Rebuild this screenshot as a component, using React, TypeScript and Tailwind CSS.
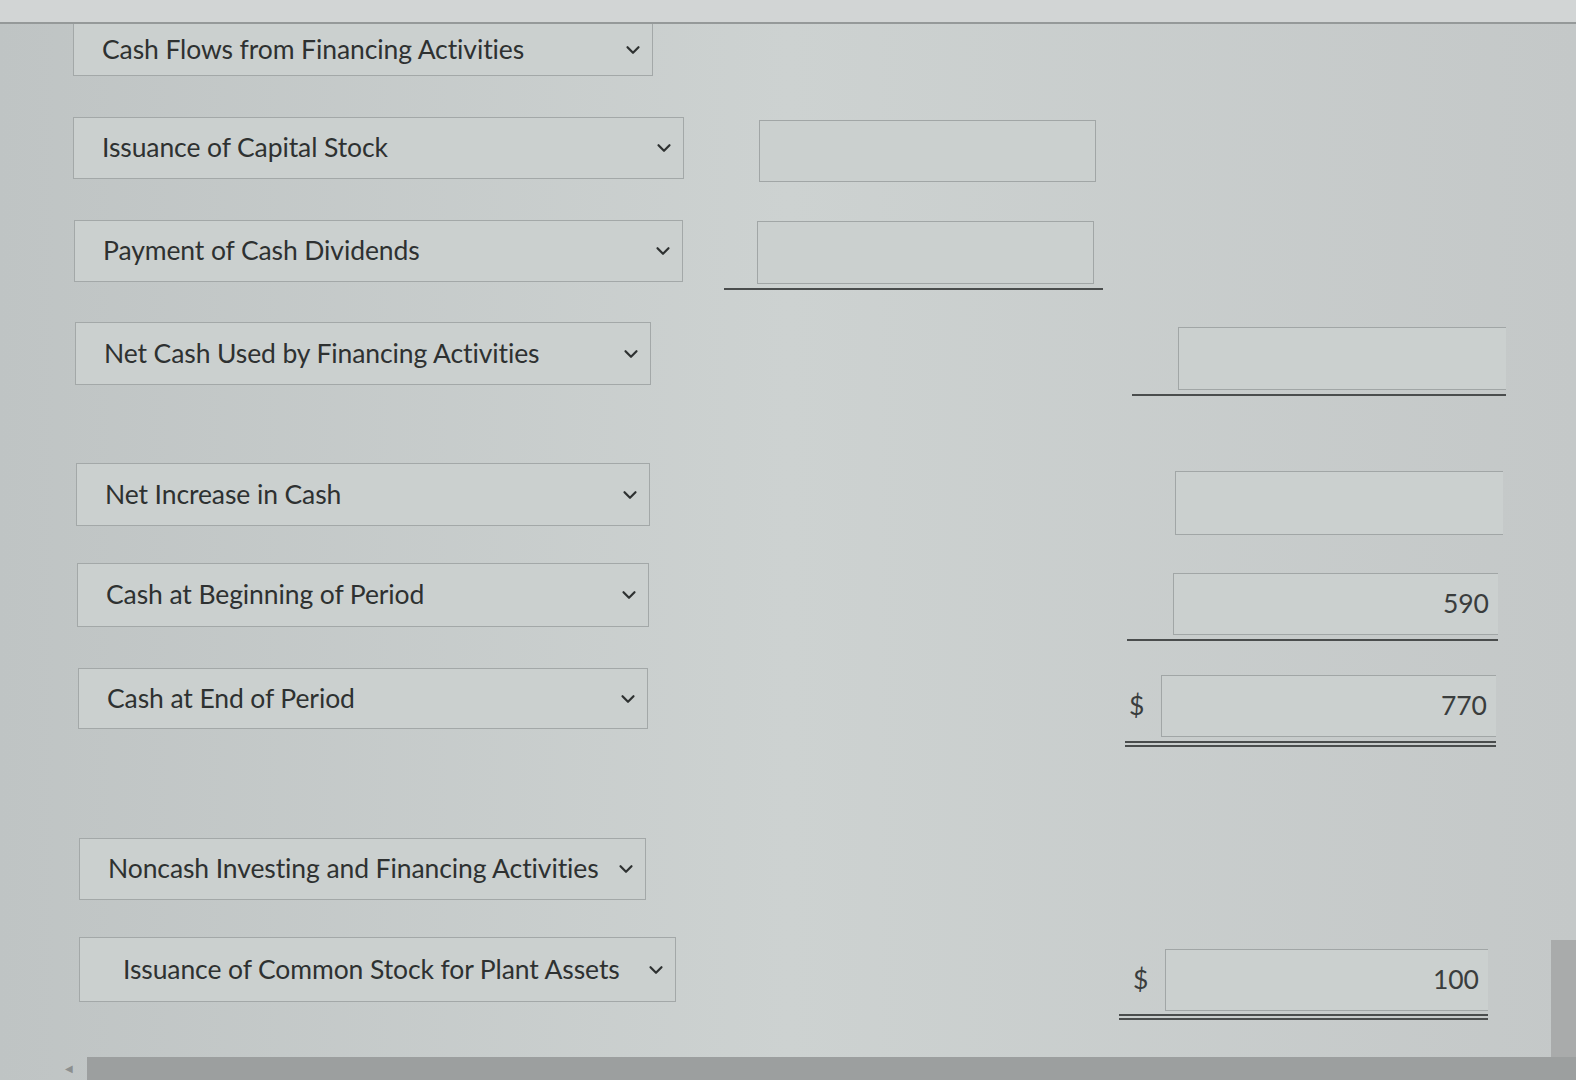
import { ChevronDown } from "lucide-react";

type SelectProps = {
  label: string;
  className: string;
  textClass?: string;
};

function SelectBox({ label, className, textClass = "pl-[28px]" }: SelectProps) {
  return (
    <div
      className={`flex shrink-0 items-center justify-between border border-[#a3a8a8] bg-[#cbd0cf] pr-[8px] ${className}`}
    >
      <span className={`text-[26.5px] tracking-[-0.1px] text-[#2e3131] ${textClass}`}>{label}</span>
      <ChevronDown size={22} strokeWidth={2.4} className="text-[#2e3131]" />
    </div>
  );
}

function AmountBox({ value, className }: { value?: string; className: string }) {
  return (
    <div
      className={`flex shrink-0 items-center justify-end border border-[#a1a6a6] bg-[#cbd0cf] pr-[9px] text-[26.5px] text-[#3a3d3d] ${className}`}
    >
      {value}
    </div>
  );
}

function App() {
  return (
    <div
      className="relative flex h-[1080px] w-[1576px] flex-col overflow-hidden bg-linear-to-r from-[#bfc4c4] via-[#cdd2d1] to-[#c4c8c8]"
      style={{ fontFamily: "Lato, 'Open Sans', sans-serif" }}
    >
      <div className="h-[24px] shrink-0 border-b-2 border-[#959999] bg-[#d2d5d5]" />

      <div className="flex min-h-0 flex-1 flex-col">
        {/* Cash Flows from Financing Activities */}
        <div className="flex h-[52px]">
          <SelectBox
            label="Cash Flows from Financing Activities"
            className="ml-[73px] h-[52px] w-[580px] border-t-0"
          />
        </div>

        {/* Issuance of Capital Stock */}
        <div className="mt-[41px] flex h-[62px] items-start">
          <SelectBox label="Issuance of Capital Stock" className="ml-[73px] h-[62px] w-[611px]" />
          <AmountBox className="ml-[75px] mt-[3px] h-[62px] w-[337px]" />
        </div>

        {/* Payment of Cash Dividends */}
        <div className="mt-[41px] flex h-[62px] items-start">
          <SelectBox label="Payment of Cash Dividends" className="ml-[74px] h-[62px] w-[609px]" />
          <div className="ml-[41px] flex w-[379px] flex-col items-end">
            <AmountBox className="mr-[9px] mt-[1px] h-[63px] w-[337px]" />
            <div className="mt-[4px] h-[2px] w-full bg-[#4a4d4d]" />
          </div>
        </div>

        {/* Net Cash Used by Financing Activities */}
        <div className="mt-[40px] flex h-[63px] items-start">
          <SelectBox
            label="Net Cash Used by Financing Activities"
            className="ml-[75px] h-[63px] w-[576px]"
          />
          <div className="ml-[481px] flex w-[374px] flex-col items-end">
            <AmountBox className="mt-[5px] h-[63px] w-[328px] border-r-0" />
            <div className="mt-[4px] h-[2px] w-full bg-[#4a4d4d]" />
          </div>
        </div>

        {/* Net Increase in Cash */}
        <div className="mt-[78px] flex h-[63px] items-start">
          <SelectBox label="Net Increase in Cash" className="ml-[76px] h-[63px] w-[574px]" />
          <AmountBox className="ml-[525px] mt-[8px] h-[64px] w-[328px] border-r-0" />
        </div>

        {/* Cash at Beginning of Period */}
        <div className="mt-[37px] flex h-[64px] items-start">
          <SelectBox label="Cash at Beginning of Period" className="ml-[77px] h-[64px] w-[572px]" />
          <div className="ml-[478px] flex w-[371px] flex-col items-end">
            <AmountBox value="590" className="mt-[10px] h-[62px] w-[325px] border-r-0" />
            <div className="mt-[4px] h-[2px] w-full bg-[#4a4d4d]" />
          </div>
        </div>

        {/* Cash at End of Period */}
        <div className="mt-[41px] flex h-[61px] items-start">
          <SelectBox label="Cash at End of Period" className="ml-[78px] h-[61px] w-[570px]" />
          <div className="ml-[477px] flex w-[371px] flex-col">
            <div className="mt-[7px] flex items-center">
              <span className="w-[36px] pl-[4px] text-[26.5px] text-[#3a3d3d]">$</span>
              <AmountBox value="770" className="h-[62px] flex-1 border-r-0" />
            </div>
            <div className="mt-[4px] h-[2px] w-full bg-[#4a4d4d]" />
            <div className="mt-[2px] h-[2px] w-full bg-[#4a4d4d]" />
          </div>
        </div>

        {/* Noncash Investing and Financing Activities */}
        <div className="mt-[109px] flex h-[62px]">
          <SelectBox
            label="Noncash Investing and Financing Activities"
            className="ml-[79px] h-[62px] w-[567px]"
          />
        </div>

        {/* Issuance of Common Stock for Plant Assets */}
        <div className="mt-[37px] flex h-[65px] items-start">
          <SelectBox
            label="Issuance of Common Stock for Plant Assets"
            className="ml-[79px] h-[65px] w-[597px]"
            textClass="pl-[43px]"
          />
          <div className="ml-[443px] flex w-[369px] flex-col">
            <div className="mt-[12px] flex items-center">
              <span className="w-[46px] pl-[14px] text-[26.5px] text-[#3a3d3d]">$</span>
              <AmountBox value="100" className="h-[62px] flex-1 border-r-0" />
            </div>
            <div className="mt-[3px] h-[2px] w-full bg-[#4a4d4d]" />
            <div className="mt-[2px] h-[2px] w-full bg-[#4a4d4d]" />
          </div>
        </div>
      </div>

      {/* horizontal scrollbar */}
      <div className="flex h-[23px] shrink-0 items-center">
        <div className="flex w-[87px] items-center justify-end pr-[14px]">
          <span className="text-[10px] text-[#8c8f8f]">◀</span>
        </div>
        <div className="h-full flex-1 bg-[#9c9f9f]" />
      </div>

      {/* vertical scrollbar thumb */}
      <div className="absolute bottom-[23px] right-0 top-[940px] w-[25px] bg-[#a9abab]" />
    </div>
  );
}

export default App;
